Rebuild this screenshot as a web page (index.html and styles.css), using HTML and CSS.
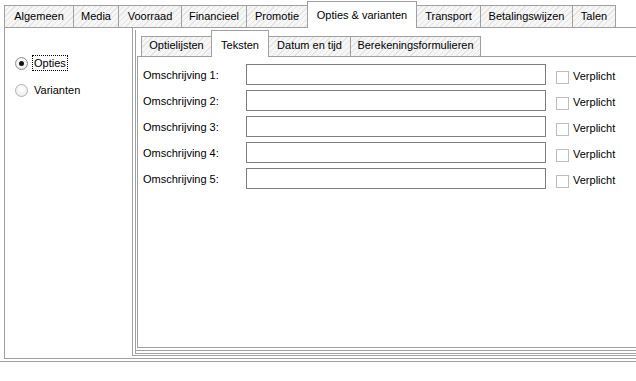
FILE: index.html
```html
<!DOCTYPE html>
<html lang="nl">
<head>
    <meta charset="UTF-8">
    <meta name="viewport" content="width=device-width, initial-scale=1.0">
    <title>Opties &amp; varianten</title>
    <link rel="stylesheet" href="styles.css">
</head>
<body>
    <div class="tabs outer-tabs">
        <div class="tab tab-algemeen">Algemeen</div>
        <div class="tab tab-media">Media</div>
        <div class="tab tab-voorraad">Voorraad</div>
        <div class="tab tab-financieel">Financieel</div>
        <div class="tab tab-promotie">Promotie</div>
        <div class="tab tab-opties active">Opties &amp; varianten</div>
        <div class="tab tab-transport">Transport</div>
        <div class="tab tab-betaling">Betalingswijzen</div>
        <div class="tab tab-talen">Talen</div>
    </div>

    <div class="panel">
        <div class="side">
            <div class="radio-row">
                <span class="radio checked"></span>
                <span class="radio-label focused">Opties</span>
            </div>
            <div class="radio-row">
                <span class="radio"></span>
                <span class="radio-label">Varianten</span>
            </div>
        </div>

        <div class="frame-a">
            <div class="frame-b">
                <div class="tab-wrap">
                    <div class="tabs inner-tabs">
                        <div class="tab tab-optielijsten">Optielijsten</div>
                        <div class="tab tab-teksten active">Teksten</div>
                        <div class="tab tab-datum">Datum en tijd</div>
                        <div class="tab tab-formules">Berekeningsformulieren</div>
                    </div>
                    <div class="inner-panel">
                        <div class="form">
                            <div class="row">
                                <label class="row-label">Omschrijving 1:</label>
                                <div class="textbox"></div>
                                <span class="checkbox"></span>
                                <span class="check-label">Verplicht</span>
                            </div>
                            <div class="row">
                                <label class="row-label">Omschrijving 2:</label>
                                <div class="textbox"></div>
                                <span class="checkbox"></span>
                                <span class="check-label">Verplicht</span>
                            </div>
                            <div class="row">
                                <label class="row-label">Omschrijving 3:</label>
                                <div class="textbox"></div>
                                <span class="checkbox"></span>
                                <span class="check-label">Verplicht</span>
                            </div>
                            <div class="row">
                                <label class="row-label">Omschrijving 4:</label>
                                <div class="textbox"></div>
                                <span class="checkbox"></span>
                                <span class="check-label">Verplicht</span>
                            </div>
                            <div class="row">
                                <label class="row-label">Omschrijving 5:</label>
                                <div class="textbox"></div>
                                <span class="checkbox"></span>
                                <span class="check-label">Verplicht</span>
                            </div>
                        </div>
                    </div>
                </div>
            </div>
        </div>
    </div>
    <div class="baseline"></div>
</body>
</html>
```

FILE: styles.css
```css
body {
    margin: 0;
    width: 636px;
    height: 381px;
    overflow: hidden;
    background: #fff;
    font-family: "Liberation Sans", Arial, sans-serif;
    font-size: 11px;
    color: #000;
}

/* tab strips */
.tabs {
    display: flex;
    align-items: flex-end;
}
.tab {
    box-sizing: border-box;
    border: 1px solid #a0a0a0;
    border-bottom: none;
    margin-left: -1px;
    text-align: center;
    white-space: nowrap;
    background: repeating-linear-gradient(135deg, #f6f6f6 0, #f6f6f6 3px, #e3e3e3 3px, #e3e3e3 4px);
}
.tab:first-child { margin-left: 0; }
.tab.active {
    position: relative;
    z-index: 1;
    background: #fff;
    margin-bottom: -1px;
}

.outer-tabs {
    height: 27px;
    padding-left: 4px;
}
.outer-tabs .tab {
    height: 22px;
    line-height: 20px;
}
.outer-tabs .tab.active {
    height: 27px;
    padding-top: 3px;
}
.tab-algemeen { width: 70px; }
.tab-media { width: 46px; }
.tab-voorraad { width: 64px; }
.tab-financieel { width: 66px; }
.tab-promotie { width: 62px; }
.tab-opties { width: 110px; }
.tab-transport { width: 65px; }
.tab-betaling { width: 93px; }
.tab-talen { width: 44px; }

.inner-tabs {
    height: 26px;
    padding-left: 4px;
}
.inner-tabs .tab {
    height: 20px;
    line-height: 17px;
}
.inner-tabs .tab.active {
    height: 27px;
    padding-top: 6px;
}
.tab-optielijsten { width: 71px; }
.tab-teksten { width: 58px; }
.tab-datum { width: 83px; }
.tab-formules { width: 131px; }

/* outer page */
.panel {
    box-sizing: border-box;
    display: flex;
    align-items: flex-start;
    margin-left: 4px;
    width: 640px;
    height: 332px;
    border: 1px solid #a0a0a0;
    border-right: none;
}

.side {
    width: 127px;
    flex-shrink: 0;
    padding: 27px 0 0 10px;
    box-sizing: border-box;
    display: flex;
    flex-direction: column;
    gap: 11px;
}
.radio-row {
    display: flex;
    align-items: center;
    height: 16px;
}
.radio {
    box-sizing: border-box;
    width: 13px;
    height: 13px;
    border-radius: 50%;
    border: 1px solid #b3b3b3;
    background: radial-gradient(circle at 50% 40%, #ffffff 0, #f2f2f2 60%, #dcdcdc 100%);
    display: flex;
    align-items: center;
    justify-content: center;
}
.radio.checked {
    border-color: #8e8e8e;
}
.radio.checked::after {
    content: "";
    width: 5px;
    height: 5px;
    border-radius: 50%;
    background: #111;
}
.radio-label {
    margin-left: 4px;
    padding: 0 1px;
    line-height: 14px;
    border: 1px dotted transparent;
}
.radio-label.focused {
    border-color: #000;
}

/* nested frames round the inner tab control */
.frame-a {
    box-sizing: border-box;
    flex: 1;
    height: 328px;
    border-left: 1px solid #a0a0a0;
    border-bottom: 1px solid #a0a0a0;
}
.frame-b {
    box-sizing: border-box;
    margin: 2px 0 0 2px;
    height: 324px;
    border-left: 1px solid #a0a0a0;
    border-bottom: 1px solid #a0a0a0;
}
.tab-wrap {
    box-sizing: border-box;
    margin-top: 1px;
    padding-left: 1px;
    height: 321px;
    border-bottom: 1px solid #a0a0a0;
}
.inner-panel {
    box-sizing: border-box;
    height: 292px;
    border: 1px solid #a0a0a0;
    border-right: none;
    background: #fff;
}

/* text rows */
.form {
    display: flex;
    flex-direction: column;
    gap: 5px;
    padding: 7px 0 0 5px;
}
.row {
    display: flex;
    align-items: flex-start;
    height: 21px;
}
.row-label {
    width: 103px;
    flex-shrink: 0;
    padding-top: 1px;
    line-height: 21px;
}
.textbox {
    box-sizing: border-box;
    width: 300px;
    height: 21px;
    border: 1px solid #7f7f7f;
    background: #fff;
}
.checkbox {
    box-sizing: border-box;
    width: 13px;
    height: 13px;
    margin: 7px 0 0 10px;
    border: 1px solid #bdbdbd;
    background: #fff;
}
.check-label {
    margin-left: 4px;
    padding-top: 2px;
    line-height: 21px;
}

.baseline {
    margin-top: 2px;
    width: 636px;
    border-top: 1px solid #a0a0a0;
}
```
